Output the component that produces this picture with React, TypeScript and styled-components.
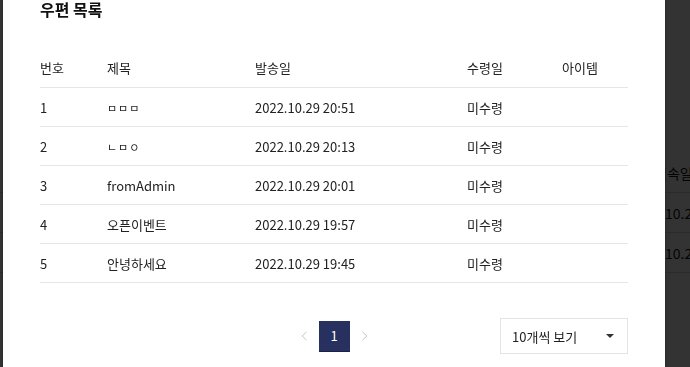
import React from "react";
import styled, { createGlobalStyle } from "styled-components";

const GlobalStyle = createGlobalStyle`
  * { box-sizing: border-box; }
  html, body { margin: 0; padding: 0; overflow: hidden; }
  body {
    background: #ffffff;
    font-family: "Noto Sans CJK KR", "Noto Sans", sans-serif;
    color: #222222;
  }
`;

/* ---------- background page (behind the dimmed overlay) ---------- */

const BackgroundPage = styled.div`
  width: 690px;
  height: 367px;
  padding-top: 153px;
  background: #ffffff;
  overflow: hidden;
`;

const BgRow = styled.div`
  display: grid;
  grid-template-columns: 630px 1fr;
  height: 40px;
  align-items: center;
  border-bottom: 1px solid #d8d8d8;
  font-size: 14px;
  color: #111111;
  white-space: nowrap;
  overflow: hidden;
`;

const BgCell = styled.div<{ $indent?: number }>`
  padding-left: ${(p) => p.$indent ?? 0}px;
  overflow: hidden;
`;

const Overlay = styled.div`
  position: fixed;
  inset: 0;
  background: rgba(0, 0, 0, 0.8);
  display: flex;
  align-items: flex-start;
  padding-left: 3px;
  overflow: hidden;
`;

/* ---------- modal ---------- */

const Modal = styled.div`
  width: 662px;
  margin-top: -28px;
  padding: 26px 37px 60px;
  background: #ffffff;
  box-shadow: 0 0 3px rgba(0, 0, 0, 0.35);
`;

const Title = styled.h2`
  margin: 0 0 27px;
  font-size: 16px;
  line-height: 23px;
  font-weight: 700;
  color: #111111;
`;

const Table = styled.div`
  display: flex;
  flex-direction: column;
`;

const Row = styled.div<{ $header?: boolean }>`
  display: grid;
  grid-template-columns: 67px 148px 212px 95px 1fr;
  align-items: center;
  height: ${(p) => (p.$header ? 40 : 39)}px;
  border-bottom: 1px solid #e6e6e6;
  font-size: 13px;
  color: #222222;
`;

const Cell = styled.div`
  white-space: nowrap;
`;

const Jamo = styled.span`
  font-size: 11px;
  letter-spacing: 1px;
`;

const Footer = styled.div`
  display: grid;
  grid-template-columns: 1fr auto 1fr;
  align-items: center;
  margin-top: 35px;
`;

const Pagination = styled.div`
  grid-column: 2;
  display: flex;
  align-items: center;
  gap: 5px;
`;

const ArrowButton = styled.button`
  width: 20px;
  height: 31px;
  padding: 0;
  border: none;
  background: transparent;
  display: flex;
  align-items: center;
  justify-content: center;
  color: #c8c8c8;
`;

const PageButton = styled.button<{ $active?: boolean }>`
  width: 31px;
  height: 31px;
  padding: 0;
  border: none;
  border-bottom: 1px solid #1a2147;
  background: ${(p) => (p.$active ? "#27305e" : "transparent")};
  color: ${(p) => (p.$active ? "#ffffff" : "#333333")};
  font-family: "Noto Sans CJK KR", "Noto Sans", sans-serif;
  font-size: 13px;
`;

const Select = styled.div`
  grid-column: 3;
  justify-self: end;
  width: 128px;
  height: 36px;
  border: 1px solid #e3e3e3;
  display: flex;
  align-items: center;
  justify-content: space-between;
  padding: 0 13px 0 11px;
  font-size: 13px;
  color: #222222;
`;

const Caret = styled.span`
  width: 0;
  height: 0;
  border-left: 4px solid transparent;
  border-right: 4px solid transparent;
  border-top: 4px solid #333333;
`;

const Chevron = ({ dir }: { dir: "left" | "right" }) => (
  <svg width="6" height="10" viewBox="0 0 6 10" fill="none">
    <path
      d={dir === "left" ? "M5.5 1 L1 5 L5.5 9" : "M0.5 1 L5 5 L0.5 9"}
      stroke="currentColor"
      strokeWidth="1"
    />
  </svg>
);

type Mail = { no: number; title: React.ReactNode; sent: string; received: string; item: string };

const mails: Mail[] = [
  { no: 1, title: <Jamo>ㅁㅁㅁ</Jamo>, sent: "2022.10.29 20:51", received: "미수령", item: "" },
  { no: 2, title: <Jamo>ㄴㅁㅇ</Jamo>, sent: "2022.10.29 20:13", received: "미수령", item: "" },
  { no: 3, title: "fromAdmin", sent: "2022.10.29 20:01", received: "미수령", item: "" },
  { no: 4, title: "오픈이벤트", sent: "2022.10.29 19:57", received: "미수령", item: "" },
  { no: 5, title: "안녕하세요", sent: "2022.10.29 19:45", received: "미수령", item: "" },
];

export default function App() {
  return (
    <>
      <GlobalStyle />
      <BackgroundPage>
        <BgRow>
          <BgCell />
          <BgCell $indent={24}>접속일</BgCell>
        </BgRow>
        <BgRow>
          <BgCell />
          <BgCell>2022.10.29</BgCell>
        </BgRow>
        <BgRow>
          <BgCell />
          <BgCell>2022.10.29</BgCell>
        </BgRow>
      </BackgroundPage>
      <Overlay>
        <Modal>
          <Title>우편 목록</Title>
          <Table>
            <Row $header>
              <Cell>번호</Cell>
              <Cell>제목</Cell>
              <Cell>발송일</Cell>
              <Cell>수령일</Cell>
              <Cell>아이템</Cell>
            </Row>
            {mails.map((m) => (
              <Row key={m.no}>
                <Cell>{m.no}</Cell>
                <Cell>{m.title}</Cell>
                <Cell>{m.sent}</Cell>
                <Cell>{m.received}</Cell>
                <Cell>{m.item}</Cell>
              </Row>
            ))}
          </Table>
          <Footer>
            <Pagination>
              <ArrowButton aria-label="이전">
                <Chevron dir="left" />
              </ArrowButton>
              <PageButton $active>1</PageButton>
              <ArrowButton aria-label="다음">
                <Chevron dir="right" />
              </ArrowButton>
            </Pagination>
            <Select>
              <span>10개씩 보기</span>
              <Caret />
            </Select>
          </Footer>
        </Modal>
      </Overlay>
    </>
  );
}
